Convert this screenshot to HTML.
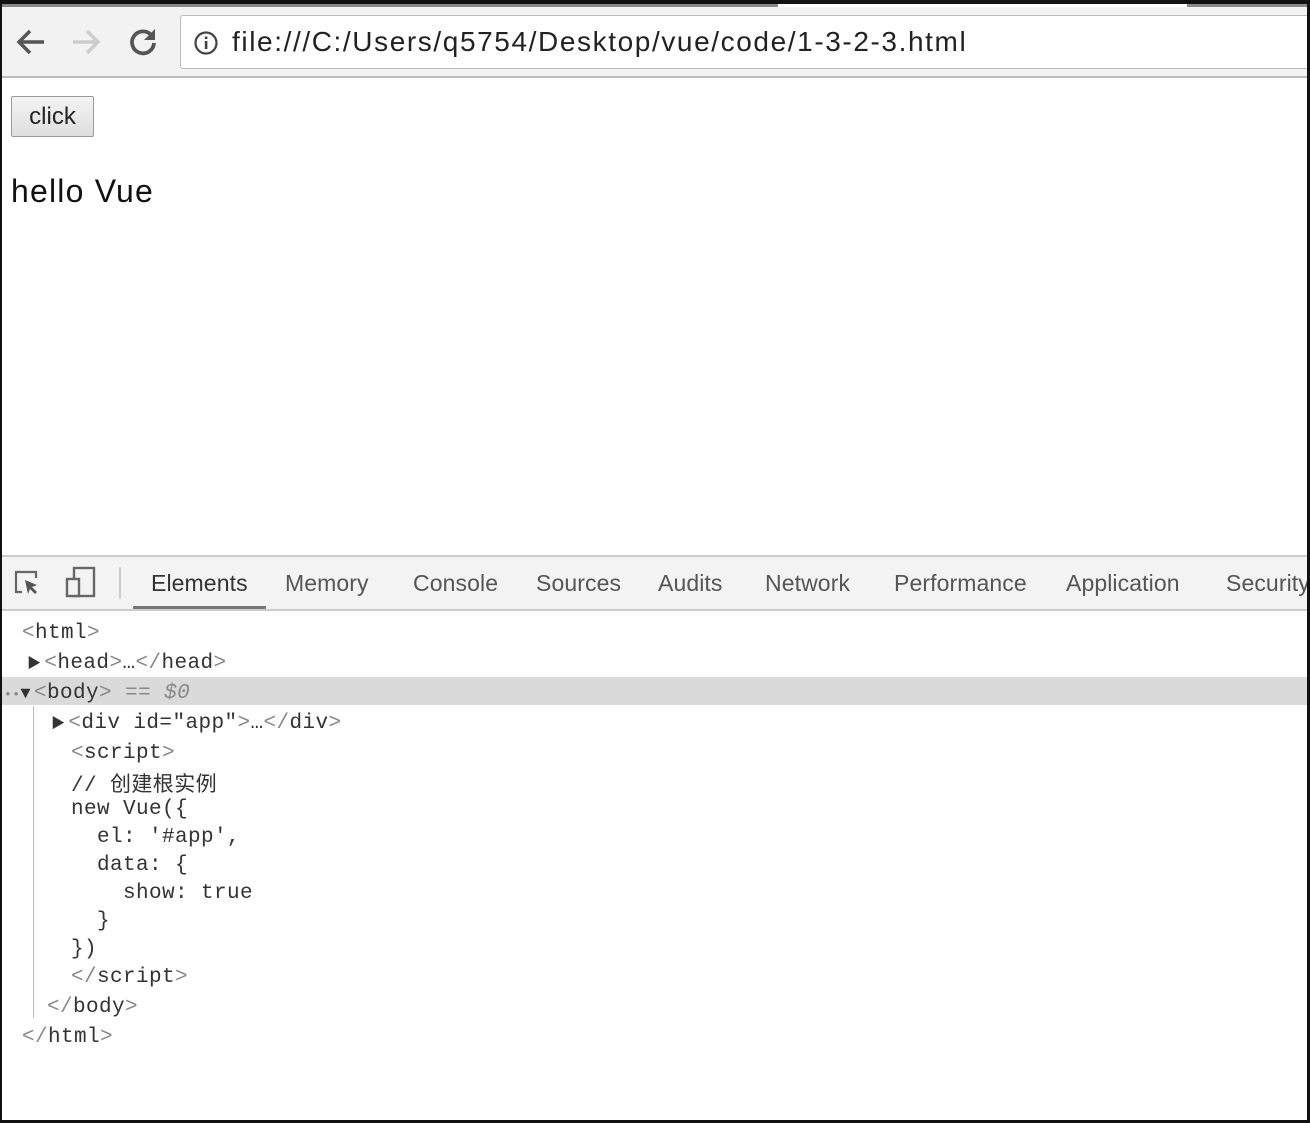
<!DOCTYPE html>
<html><head><meta charset="utf-8"><style>
*{margin:0;padding:0;box-sizing:border-box}
body{width:1310px;height:1123px;position:relative;background:#fff;overflow:hidden;font-family:"Liberation Sans",sans-serif}
.a{position:absolute;white-space:pre}
.tab{position:absolute;top:570px;font-size:23px;color:#555;letter-spacing:0.1px}
.c{position:absolute;font-family:"Liberation Mono","Noto Sans CJK SC",monospace;font-size:21px;color:#333;white-space:pre;letter-spacing:0.4px}
.g{color:#888}
.t{font-size:14px;margin-right:3px}
</style></head><body>
<div class="a" style="left:0;top:0;width:1310px;height:4px;background:#111"></div>
<div class="a" style="left:0;top:4px;width:778px;height:3px;background:#888"></div>
<div class="a" style="left:1187px;top:4px;width:123px;height:3px;background:#888"></div>
<div class="a" style="left:0;top:7px;width:1310px;height:71px;background:#f2f2f2;border-bottom:2px solid #bbb"></div>
<svg class="a" style="left:14px;top:26px" width="34" height="32" viewBox="0 0 34 32"><path d="M30 16H5M16 5L5 16l11 11" stroke="#555" stroke-width="3.5" fill="none"/></svg>
<svg class="a" style="left:70px;top:26px" width="34" height="32" viewBox="0 0 34 32"><path d="M3 16h25M17 5l11 11-11 11" stroke="#ccc" stroke-width="3.5" fill="none"/></svg>
<svg class="a" style="left:126px;top:25px" width="34" height="34" viewBox="0 0 34 34"><path d="M26 11A11 11 0 1 0 28 18" stroke="#555" stroke-width="3.8" fill="none"/><path d="M29 4v11H18z" fill="#555"/></svg>
<div class="a" style="left:180px;top:15px;width:1140px;height:54px;background:#fff;border:1px solid #bbb;border-radius:3px"></div>
<svg class="a" style="left:193px;top:30px" width="26" height="26" viewBox="0 0 26 26"><circle cx="13" cy="13" r="10.5" stroke="#444" stroke-width="2.2" fill="none"/><rect x="11.8" y="11" width="2.6" height="8" fill="#444"/><rect x="11.8" y="6.5" width="2.6" height="2.6" fill="#444"/></svg>
<div class="a" style="left:232px;top:26px;font-size:28px;color:#222;letter-spacing:1.6px">file:///C:/Users/q5754/Desktop/vue/code/1-3-2-3.html</div>
<div class="a" style="left:11px;top:96px;width:83px;height:41px;background:linear-gradient(#f4f4f4,#dedede);border:1px solid #999;border-radius:2px;font-size:24px;color:#222;text-align:center;line-height:40px">click</div>
<div class="a" style="left:11px;top:173px;font-size:32px;color:#111;letter-spacing:1.2px">hello Vue</div>
<div class="a" style="left:0;top:555px;width:1310px;height:56px;background:#f3f3f3;border-top:2px solid #ccc;border-bottom:2px solid #ccc"></div>
<svg class="a" style="left:13px;top:569px" width="30" height="30" viewBox="0 0 30 30"><path d="M9 23H3V3h20v6" stroke="#666" stroke-width="2.2" fill="none"/><path d="M12 11l12 5-5 2 5 5-2 2-5-5-2 5z" fill="#555"/></svg>
<svg class="a" style="left:64px;top:566px" width="34" height="34" viewBox="0 0 34 34"><rect x="10" y="2" width="20" height="28" stroke="#666" stroke-width="2.4" fill="none"/><rect x="3" y="13" width="12" height="17" stroke="#666" stroke-width="2.4" fill="#f3f3f3"/></svg>
<div class="a" style="left:119px;top:567px;width:2px;height:32px;background:#ccc"></div>
<div class="tab" style="left:151px;color:#333">Elements</div>
<div class="a" style="left:133px;top:606px;width:133px;height:3px;background:#777"></div>
<div class="tab" style="left:285px">Memory</div>
<div class="tab" style="left:413px">Console</div>
<div class="tab" style="left:536px">Sources</div>
<div class="tab" style="left:658px">Audits</div>
<div class="tab" style="left:765px">Network</div>
<div class="tab" style="left:894px">Performance</div>
<div class="tab" style="left:1066px">Application</div>
<div class="tab" style="left:1226px">Security</div>
<div class="a" style="left:0;top:677px;width:1310px;height:28px;background:#dadada"></div>
<div class="a" style="left:33px;top:706px;width:1px;height:312px;background:#bbb"></div>
<div class="c g" style="left:22px;top:622px">&lt;<span style="color:#333">html</span>&gt;</div>
<div class="c" style="left:27px;top:652px"><span class="t">▶</span><span class="g">&lt;</span>head<span class="g">&gt;</span>…<span class="g">&lt;/</span>head<span class="g">&gt;</span></div>
<div class="c" style="left:4px;top:682px"><span class="g" style="font-size:13px">••</span><span class="t" style="font-size:17px">▼</span><span class="g">&lt;</span>body<span class="g">&gt;</span><span class="g" style="font-style:italic"> == $0</span></div>
<div class="c" style="left:51px;top:712px"><span class="t">▶</span><span class="g">&lt;</span>div id=<span>"app"</span><span class="g">&gt;</span>…<span class="g">&lt;/</span>div<span class="g">&gt;</span></div>
<div class="c" style="left:71px;top:742px"><span class="g">&lt;</span>script<span class="g">&gt;</span></div>
<div class="c" style="left:71px;top:768px">// 创建根实例</div>
<div class="c" style="left:71px;top:798px">new Vue({</div>
<div class="c" style="left:71px;top:826px">  el: '#app',</div>
<div class="c" style="left:71px;top:854px">  data: {</div>
<div class="c" style="left:71px;top:882px">    show: true</div>
<div class="c" style="left:71px;top:910px">  }</div>
<div class="c" style="left:71px;top:938px">})</div>
<div class="c" style="left:71px;top:966px"><span class="g">&lt;/</span>script<span class="g">&gt;</span></div>
<div class="c" style="left:47px;top:996px"><span class="g">&lt;/</span>body<span class="g">&gt;</span></div>
<div class="c" style="left:22px;top:1026px"><span class="g">&lt;/</span>html<span class="g">&gt;</span></div>
<div class="a" style="left:0;top:0;width:2px;height:1123px;background:#111"></div>
<div class="a" style="left:1307px;top:0;width:3px;height:1123px;background:#111"></div>
<div class="a" style="left:0;top:1120px;width:1310px;height:3px;background:#111"></div>
</body></html>
